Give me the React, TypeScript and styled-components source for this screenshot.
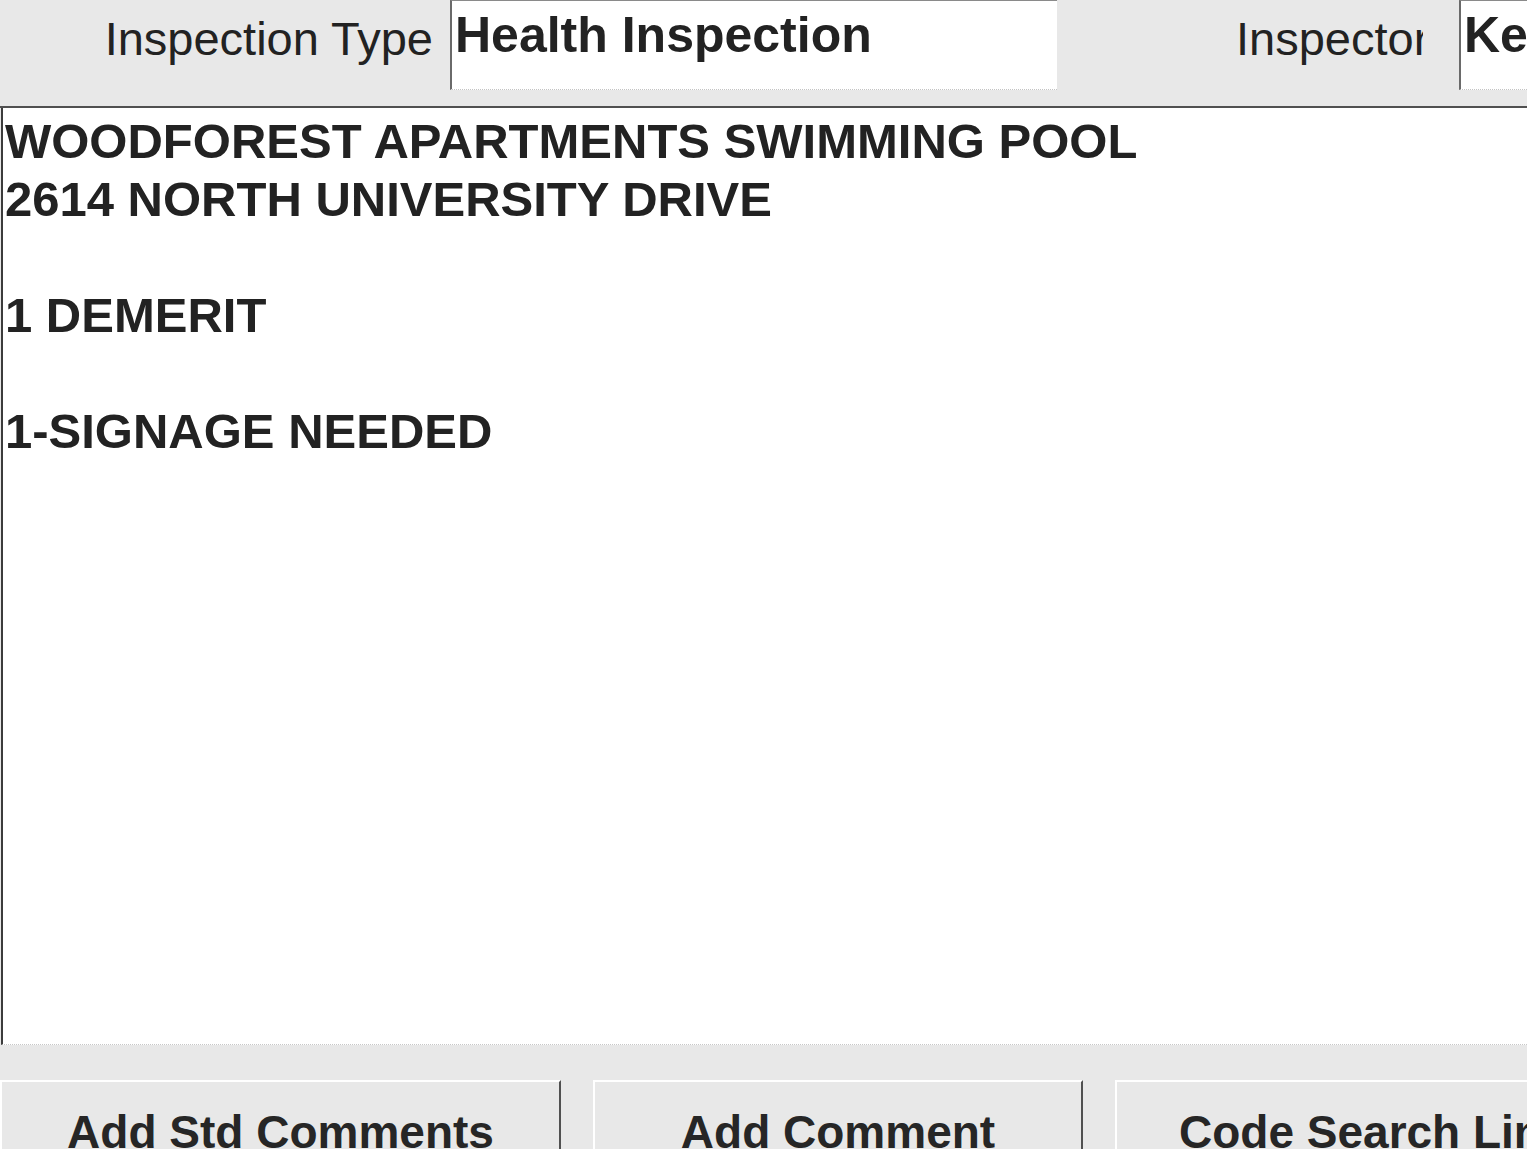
import * as React from "react"
import styled, { createGlobalStyle } from "styled-components"

const colors = {
  panel: "#e8e8e8",
  field: "#ffffff",
  text: "#222222",
  shadow: "#505050",
  light: "#ffffff"
}

const GlobalStyle = createGlobalStyle`
  html, body {
    margin: 0;
    padding: 0;
    background: ${colors.panel};
  }
  body {
    font-family: "Liberation Sans", Arial, sans-serif;
    color: ${colors.text};
  }
`

const Screen = styled.div`
  width: 1527px;
  height: 1149px;
  overflow: hidden;
  display: flex;
  flex-direction: column;
  background: ${colors.panel};
`

const Header = styled.header`
  flex: 0 0 auto;
  height: 108px;
  display: flex;
  align-items: flex-start;
  border-bottom: 2px solid ${colors.shadow};
  box-sizing: border-box;
`

const Label = styled.label<{ $width: number; $gapLeft: number; $align?: string }>`
  flex: 0 0 auto;
  width: ${p => p.$width}px;
  margin-left: ${p => p.$gapLeft}px;
  padding-top: 11px;
  font-size: 47px;
  white-space: nowrap;
  overflow: hidden;
  text-align: ${p => p.$align || "right"};
`

const Field = styled.div<{ $width?: number; $gapLeft: number }>`
  flex: ${p => (p.$width ? "0 0 auto" : "1 1 auto")};
  width: ${p => (p.$width ? `${p.$width}px` : "auto")};
  margin-left: ${p => p.$gapLeft}px;
  height: 90px;
  box-sizing: border-box;
  background: ${colors.field};
  border-top: 1px solid #8a8a8a;
  border-left: 2px solid #6a6a6a;
  border-bottom: 1px dotted #c4c4c4;
  padding: 5px 0 0 3px;
  font-size: 50px;
  font-weight: bold;
  white-space: nowrap;
  overflow: hidden;
`

const CommentArea = styled.section`
  flex: 0 0 auto;
  height: 937px;
  box-sizing: border-box;
  margin-left: 1px;
  background: ${colors.field};
  border-left: 2px solid #3c3c3c;
  border-bottom: 1px dotted #c8c8c8;
  padding: 4px 0 0 2px;
  font-size: 49px;
  font-weight: bold;
  overflow: hidden;
`

const CommentLine = styled.div`
  min-height: 58px;
  line-height: 58px;
  white-space: pre;
`

const ButtonBar = styled.footer`
  flex: 1 1 auto;
  display: flex;
  gap: 32px;
  padding-top: 35px;
  overflow: hidden;
`

const Button = styled.button<{ $width: number; $indent?: number }>`
  flex: 0 0 auto;
  width: ${p => p.$width}px;
  height: 100px;
  box-sizing: border-box;
  background: ${colors.panel};
  border: none;
  border-top: 2px solid ${colors.light};
  border-left: 2px solid ${colors.light};
  border-right: 2px solid ${colors.shadow};
  padding: 1px 0 0 ${p => p.$indent || 0}px;
  margin: 0;
  font-family: "Liberation Sans", Arial, sans-serif;
  font-size: 46px;
  font-weight: bold;
  color: #262626;
  text-align: ${p => (p.$indent ? "left" : "center")};
  white-space: nowrap;
  align-self: flex-start;

  u {
    text-decoration-thickness: 3px;
    text-underline-offset: 4px;
  }
`

const lines = [
  "WOODFOREST APARTMENTS SWIMMING POOL",
  "2614 NORTH UNIVERSITY DRIVE",
  "",
  "1 DEMERIT",
  "",
  "1-SIGNAGE NEEDED"
]

export default function App() {
  return (
    <>
      <GlobalStyle />
      <Screen>
        <Header>
          <Label $width={433} $gapLeft={0}>Inspection Type</Label>
          <Field $width={607} $gapLeft={17}>Health Inspection</Field>
          <Label $width={187} $gapLeft={179} $align="left">
            Inspector
          </Label>
          <Field $gapLeft={36}>Ken</Field>
        </Header>
        <CommentArea>
          {lines.map((line, i) => (
            <CommentLine key={i}>{line}</CommentLine>
          ))}
        </CommentArea>
        <ButtonBar>
          <Button $width={561}>
            Add <u>S</u>td Comments
          </Button>
          <Button $width={490}>
            <u>A</u>dd Comment
          </Button>
          <Button $width={560} $indent={62}>
            Code Search Link
          </Button>
        </ButtonBar>
      </Screen>
    </>
  )
}
